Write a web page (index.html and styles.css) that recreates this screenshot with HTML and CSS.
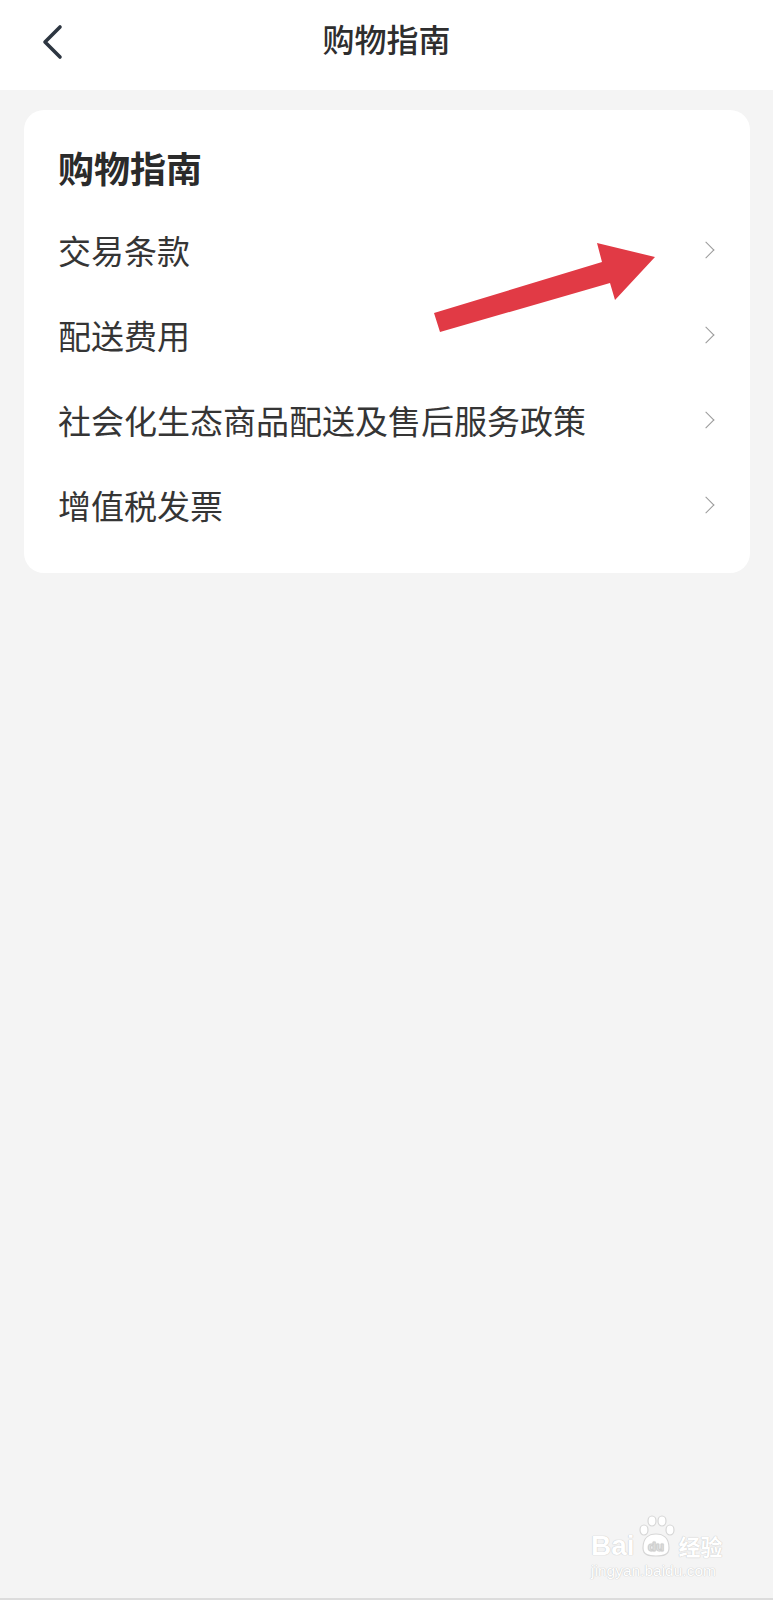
FILE: index.html
```html
<!DOCTYPE html>
<html lang="zh-CN">
<head>
    <meta charset="UTF-8">
    <meta name="viewport" content="width=device-width, initial-scale=1.0">
    <title>购物指南</title>
    <link rel="stylesheet" href="styles.css">
</head>
<body>
    <div class="page">
        <header class="topbar">
            <button class="back-btn" aria-label="返回">
                <svg width="30" height="40" viewBox="0 0 30 40">
                    <polyline points="24,5 9,20 24,35" fill="none" stroke="#2d3641" stroke-width="3.6" stroke-linecap="round" stroke-linejoin="round"/>
                </svg>
            </button>
            <h1 class="topbar-title">购物指南</h1>
        </header>

        <section class="card">
            <h2 class="card-title">购物指南</h2>
            <ul class="menu">
                <li class="menu-item"><span>交易条款</span><i class="chev"></i></li>
                <li class="menu-item"><span>配送费用</span><i class="chev"></i></li>
                <li class="menu-item"><span>社会化生态商品配送及售后服务政策</span><i class="chev"></i></li>
                <li class="menu-item"><span>增值税发票</span><i class="chev"></i></li>
            </ul>
        </section>

        <!-- red annotation arrow -->
        <svg class="annot-arrow" width="773" height="400" viewBox="0 0 773 400">
            <polygon points="434,313 602,262 597,243 655,257 615,300 610,283 440,332" fill="#e13a45"/>
        </svg>

        <div class="watermark">
            <div class="wm-logo">
                <span class="wm-bai">Bai</span>
                <svg class="wm-paw" width="42" height="44" viewBox="0 0 42 44">
                    <g fill="#fff" stroke="#d6d6d6" stroke-width="1.2">
                        <ellipse cx="9" cy="16" rx="4" ry="5"/>
                        <ellipse cx="17" cy="7" rx="4" ry="5"/>
                        <ellipse cx="27" cy="7" rx="4" ry="5"/>
                        <ellipse cx="35" cy="16" rx="4" ry="5"/>
                        <path d="M8,34 C8,24 14,20 21,20 C28,20 34,24 34,34 C34,41 28,42 21,42 C14,42 8,41 8,34 Z"/>
                    </g>
                    <text x="21" y="37" text-anchor="middle" class="wm-du">du</text>
                </svg>
                <span class="wm-jy">经验</span>
            </div>
            <div class="wm-url">jingyan.baidu.com</div>
        </div>
    </div>
</body>
</html>
```

FILE: styles.css
```css
body {
    margin: 0;
    padding: 0;
    background-color: #f4f4f4;
    font-family: "Noto Sans CJK SC", "Noto Sans", sans-serif;
    color: #333;
}
.page {
    position: relative;
    height: 1598px;
    border-bottom: 2px solid #dcdcdc;
    overflow: hidden;
}
.topbar {
    position: relative;
    height: 90px;
    background-color: #fff;
    display: flex;
    align-items: center;
    justify-content: center;
}
.back-btn {
    position: absolute;
    left: 36px;
    top: 22px;
    padding: 0;
    border: none;
    background: none;
    width: 30px;
    height: 40px;
}
.back-btn svg {
    display: block;
}
.topbar-title {
    margin: 0 0 14px 0;
    font-size: 32px;
    font-weight: 500;
    color: #2e2e2e;
    line-height: 40px;
}
.card {
    margin: 20px 23px 0 24px;
    background-color: #fff;
    border-radius: 20px;
    padding: 32px 32px 26px 34px;
}
.card-title {
    margin: 0 0 15px 0;
    font-size: 36px;
    line-height: 50px;
    font-weight: 700;
    color: #2b2b2b;
}
.menu {
    list-style: none;
    margin: 0;
    padding: 0;
}
.menu-item {
    height: 85px;
    display: flex;
    align-items: center;
    justify-content: space-between;
    font-size: 33px;
    color: #353535;
}
.chev {
    width: 11px;
    height: 11px;
    border-top: 1.8px solid #9a9a9a;
    border-right: 1.8px solid #9a9a9a;
    transform: rotate(45deg);
    margin-right: 6px;
}
.annot-arrow {
    position: absolute;
    left: 0;
    top: 0;
    pointer-events: none;
}
.watermark {
    position: absolute;
    right: 40px;
    bottom: 18px;
    width: 142px;
    color: #fff;
    text-shadow: 0 0 1px #c8c8c8, 0 0 1px #c8c8c8;
}
.wm-logo {
    display: flex;
    align-items: flex-end;
    height: 44px;
}
.wm-bai {
    font-family: "Liberation Sans", Arial, sans-serif;
    font-weight: 700;
    font-size: 28px;
    line-height: 24px;
}
.wm-paw {
    display: block;
}
.wm-du {
    font-family: "Liberation Sans", Arial, sans-serif;
    font-size: 13px;
    font-weight: 700;
    fill: #fff;
    stroke: #d0d0d0;
    stroke-width: 0.6;
}
.wm-jy {
    font-size: 22px;
    font-weight: 700;
    line-height: 26px;
    margin-left: 2px;
}
.wm-url {
    font-family: "Liberation Sans", Arial, sans-serif;
    font-size: 15.5px;
    line-height: 18px;
    margin-top: 4px;
}
```
